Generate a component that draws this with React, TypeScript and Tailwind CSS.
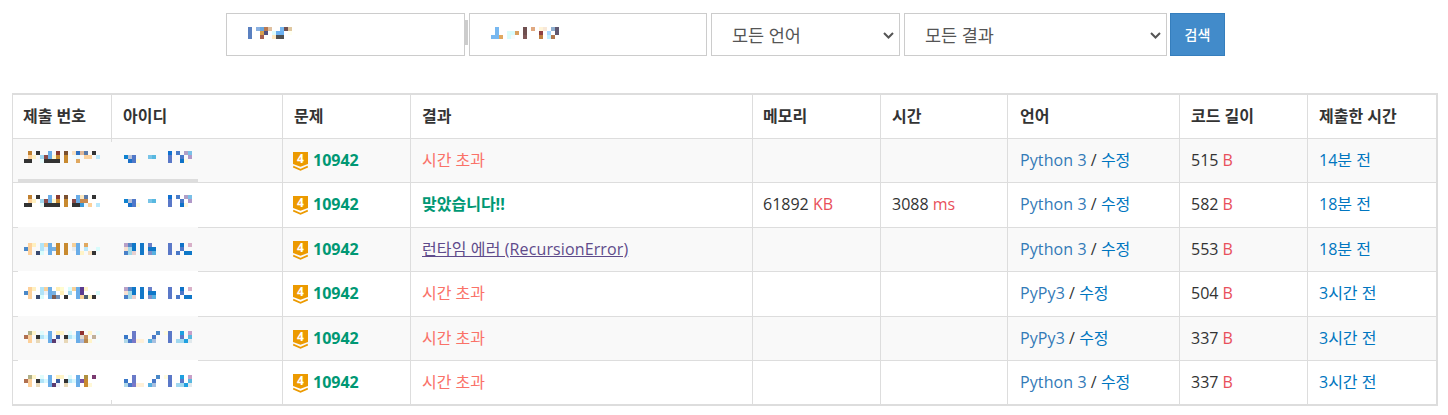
import { Fragment } from 'react'

type Mosaic = { x: number; y: number; rows: string[] }

// blurred-out names, each row is "column:colour" pairs on a 4px grid
const blurA1 = ['1:c08030 3:333 6:6aade8 8:8a3a30 10:7a5030 12:f8e0c0 13:2f70c0 14:e0b898 15:5a7aa8 17:333', '1:fdd09a 2:fff0c0 4:a0d8f0 5:8a4a48 6:6aade8 7:fff8d0 8:c88a30 10:c88a30 12:f4fafa 13:e8f8ff 15:fcd09a 16:fcd09a 18:b8e8fc', '0:333 1:333 4:e8fcfc 5:333 6:333 7:333 8:333 10:c88a30 13:e0a860']
const blurA2 = ['1:c08030 3:333 6:6aade8 8:8a3a30 10:7a5030 13:6aade8 14:fce8c0 15:5a7aa8 17:333', '1:fdd09a 2:fff0c0 4:a0d8f0 5:8a4a48 6:6aade8 7:fff8d0 8:c88a30 10:c88a30 12:8a4a48 13:6aade8 14:c88a50 15:c88a50', '0:333 1:333 4:e8fcfc 5:333 6:333 7:333 8:333 10:c88a30 12:333 13:333 14:3a98d8 15:f0f8fc 16:fcd09a 18:b8e8fc']
const blurB = ['11:1070d0 13:4a7cc8 15:b0a0c8 16:7ac0e8', '0:0f82d0 1:b8c0d8 2:5078c8 6:78c4e8 7:58b8e0 11:5a78c8 14:4a78c8 16:b098c8', '1:1a70c8 2:5078c8 3:fffbe0 11:5a78c8 14:0f72c8 15:fff8e0']
const blurC = ['1:fdd09a 2:fff0c0 4:b0e4f8 5:f8d098 6:6aade8 8:c88a30 10:c88a30 12:f8d098 13:6aade8 15:e0a860', '0:4a88c8 1:fdd09a 4:b0e4f8 5:e8f0f8 6:6aade8 7:78b0e0 8:c88a30 10:c88a30 12:e8ecf0 13:6aade8 15:b8e8fc 18:d8fcfc', '1:fdd09a 3:3a4a70 4:d8fcfc 6:6aade8 8:c88a30 10:c88a30 13:6aade8 14:fff4c8 16:f8e0c0 17:333']
const blurD = ['1:fdd09a 2:fff0c0 4:b0e4f8 5:f8d098 6:6aade8 8:fff0b8 9:fffcd0 11:d8fcfc 12:f8d098 13:6aade8 14:5a3a90 15:fff4c8', '0:4a88c8 1:fdd09a 4:b0e4f8 5:e8f0f8 6:6aade8 7:78b0e0 9:fff0b8 11:a0d8f0 13:6aade8 14:5a3a90 18:d8fcfc', '1:fdd09a 3:3a4a70 4:d8fcfc 6:6aade8 7:7a5a50 8:7090b8 10:333 13:6aade8 14:f8d098 15:4a6070 16:fff4c8 17:333']
const blurE = ['0:b8a0c8 1:5a88c8 2:0f78c8 4:1478c8 6:6a80c8 11:5a78c8 14:0f72c8 16:d8b0c8', '0:f8e0d0 1:a0d8e8 2:0f78c8 4:1478c8 6:0f78c8 7:0f78c8 11:5a78c8 14:5078c8', '0:4a80c8 1:a0d8e8 2:e8d0d0 4:1478c8 6:8090c8 7:58b0e0 11:5a78c8 13:4a78c8 15:0f78c8 16:0f78c8']
const blurF = ['1:b0b088 2:fff4c8 4:e0fcfc 6:6aade8 8:fff0b8 9:fff4c8 11:e0fcfc 13:6aade8 14:903030 16:fff4c8 18:e8fcfc', '0:b07050 1:fdd09a 3:333 4:b0e4f8 5:d8f8ff 6:6aade8 8:3a5aa0 10:333 11:b0e4f8 12:d8f8ff 13:6aade8 14:e0d8d0 15:c89060 17:c0b098', '1:fdd09a 3:e8d8b8 6:6aade8 7:5a3a70 8:f0f0f8 10:e8d8b8 13:6aade8 14:a8b8d8 15:b88850 16:fff4c8 18:f4fcfc']
const blurG = ['1:b0b088 2:fff4c8 4:e0fcfc 6:6aade8 8:fff0b8 9:fff4c8 11:e0fcfc 13:6aade8 15:b09040 17:7a3a70', '0:b07050 1:fdd09a 3:333 4:b0e4f8 5:d8f8ff 6:6aade8 8:3a5aa0 10:333 11:b0e4f8 12:d8f8ff 13:6aade8 14:7a50a0 15:c88a30', '1:fdd09a 3:e8d8b8 6:6aade8 7:5a3a70 8:f0f0f8 10:e8d8b8 13:6aade8 15:c88a30 16:fff8d8']
const blurH = ['2:6a7ac8 8:4a88c8 10:fffce0 11:5a78c8 14:1ea0e0 16:c8a0c8', '0:3a78c8 2:6a7ac8 7:4a78c8 11:5a78c8 14:5a78c8 16:58b8e0', '0:b0d8e8 1:4a78c8 2:7a78c8 3:fff0d8 4:fff0d8 6:58b0e0 7:a8c0e0 11:5a78c8 13:a0d8f0 14:a0d8f0 15:20a0e0 16:e0e8ec']

const overlayBlocks: Mosaic[] = [
    { x: 24, y: 151, rows: blurA1 },
    { x: 124, y: 151, rows: blurB },
    { x: 24, y: 195, rows: blurA2 },
    { x: 124, y: 195, rows: blurB },
    { x: 24, y: 243, rows: blurC },
    { x: 124, y: 243, rows: blurE },
    { x: 24, y: 287, rows: blurD },
    { x: 124, y: 287, rows: blurE },
    { x: 24, y: 331, rows: blurF },
    { x: 124, y: 331, rows: blurH },
    { x: 24, y: 375, rows: blurG },
    { x: 124, y: 375, rows: blurH },
]

const submissions = [
    { h: 'h-[44px]', result: 'tle', memory: '', time: '', lang: 'Python 3', size: '515', ago: '14분 전' },
    { h: 'h-[45px] [&>td]:pb-px', result: 'ac', memory: '61892', time: '3088', lang: 'Python 3', size: '582', ago: '18분 전' },
    { h: 'h-[44px]', result: 'rte', memory: '', time: '', lang: 'Python 3', size: '553', ago: '18분 전' },
    { h: 'h-[45px] [&>td]:pb-px', result: 'tle', memory: '', time: '', lang: 'PyPy3', size: '504', ago: '3시간 전' },
    { h: 'h-[44px]', result: 'tle', memory: '', time: '', lang: 'PyPy3', size: '337', ago: '3시간 전' },
    { h: 'h-[45px]', result: 'tle', memory: '', time: '', lang: 'Python 3', size: '337', ago: '3시간 전' },
]

const headers = [
    { label: '제출 번호', pad: 'pl-[10px]' },
    { label: '아이디', pad: 'pl-[11px]' },
    { label: '문제', pad: 'pl-[11px]' },
    { label: '결과', pad: 'pl-[11px]' },
    { label: '메모리', pad: 'pl-[10px]' },
    { label: '시간', pad: 'pl-[11px]' },
    { label: '언어', pad: 'pl-[12px]' },
    { label: '코드 길이', pad: 'pl-[11px]' },
    { label: '제출한 시간', pad: 'pl-[11px]' },
]
const colWidths = ['w-[99px]', 'w-[171px]', 'w-[128px]', 'w-[342px]', 'w-[128px]', 'w-[127px]', 'w-[172px]', 'w-[128px]', 'w-[129px]']

function Blocks({ blocks }: { blocks: Mosaic[] }) {
    return (
        <>
            {blocks.map((b, i) => (
                <Fragment key={i}>
                    {b.rows.map((row, r) =>
                        row.split(' ').map((c) => {
                            const [col, color] = c.split(':')
                            return <rect key={`${r}-${col}`} x={b.x + Number(col) * 4} y={b.y + r * 4} width={4} height={4} fill={`#${color}`} />
                        }),
                    )}
                </Fragment>
            ))}
        </>
    )
}

function TierBadge() {
    return (
        <div className="relative h-[19px] w-[15px] shrink-0 translate-y-px">
            <svg width="15" height="19" viewBox="0 0 15 19" className="absolute inset-0">
                <path d="M0 0H15V12L7.5 14.7L0 12Z" fill="#ec9a00" />
                <path d="M0.2 14.6L7.5 17.8L14.8 14.6" fill="none" stroke="#ec9a00" strokeWidth="1.6" />
            </svg>
            <span className="absolute inset-x-0 top-0 text-center text-[12px] font-bold leading-[14px] text-white">4</span>
        </div>
    )
}

function SearchInput({ width, x, rows }: { width: string; x: number; rows: string[] }) {
    return (
        <div className={`relative h-[43px] ${width}`}>
            <input className="h-full w-full border border-[#ccc] bg-white outline-none" />
            <svg width="100" height="12" viewBox={`${x} 0 100 12`} className="absolute left-[22px] top-[14px]">
                <Blocks blocks={[{ x, y: 0, rows }]} />
            </svg>
        </div>
    )
}

function SelectBox({ width, label }: { width: string; label: string }) {
    return (
        <div className={`relative ml-1 h-[43px] ${width}`}>
            <select className="h-full w-full appearance-none border border-[#ccc] bg-white pl-[20px] pt-[2px] text-[17.5px] text-[#555] outline-none">
                <option>{label}</option>
            </select>
            <svg width="11" height="7" viewBox="0 0 11 7" className="pointer-events-none absolute right-[6px] top-[19px]">
                <path d="M1 1L5.5 5.5L10 1" fill="none" stroke="#555" strokeWidth="2" />
            </svg>
        </div>
    )
}

function Result({ kind }: { kind: string }) {
    if (kind === 'ac') return <span className="font-bold text-[#009874]">맞았습니다!!</span>
    if (kind === 'rte') return <span className="tracking-[0.12px] text-[#5f4b8b] underline">런타임 에러 (RecursionError)</span>
    return <span className="text-[#fa7268]">시간 초과</span>
}

export default function App() {
    return (
        <div className="h-[415px] w-[1448px] overflow-hidden bg-white font-['Open_Sans','Noto_Sans_CJK_KR',sans-serif] text-[16px] text-[#333]">
            {/* 검색 폼 */}
            <form className="flex items-center pl-[226px] pt-[13px]">
                <SearchInput
                    width="w-[239px]"
                    x={248}
                    rows={[
                        '0:5a80c0 2:8ab0e0 3:6aa8e0 4:b87850 5:e0c0a0 8:78b8f0 9:705050 10:e0c8a0',
                        '0:5a80c0 3:d8a050 4:505080 6:e0fcfc 7:6ab0f0 8:6ab0f0 10:fffff0',
                        '0:5a80c0 3:a86050 6:ffe8c0 7:505050 8:505050',
                    ]}
                />
                <div className="mr-px h-[25px] w-[3px] -translate-y-[2px] bg-[#ccc]" />
                <SearchInput
                    width="w-[238px]"
                    x={492}
                    rows={[
                        '1:78b8f0 8:705050 10:e0a880 12:fff4d8 13:f8e8d8 15:90b0d0 16:605870',
                        '1:78b8f0 4:d8fcfc 5:d8fcfc 6:d8a060 8:705050 12:904040 14:a8d8ff 16:605870',
                        '0:78b8f0 1:78b8f0 2:e0a860 4:d8fcfc 5:f4fcfc 8:805858 12:c08040 14:c0f0ff 15:b07850',
                    ]}
                />
                <SelectBox width="w-[189px]" label="모든 언어" />
                <SelectBox width="w-[263px]" label="모든 결과" />
                <button type="button" className="ml-[3px] h-[43px] w-[55px] border border-[#357ebd] bg-[#428bca] text-[14px] font-medium text-white">
                    검색
                </button>
            </form>

            {/* 채점 현황 */}
            <div className="relative ml-3 mt-[37px] w-[1425px]">
                <table className="w-full table-fixed border-collapse border-y-2 border-r-2 border-l border-[#ddd]">
                    <colgroup>
                        {colWidths.map((w, i) => (
                            <col key={i} className={w} />
                        ))}
                    </colgroup>
                    <thead>
                        <tr className="h-[44px]">
                            {headers.map((h) => (
                                <th key={h.label} className={`border border-[#ddd] ${h.pad} text-left font-bold text-[#333]`}>
                                    {h.label}
                                </th>
                            ))}
                        </tr>
                    </thead>
                    <tbody>
                        {submissions.map((s, i) => (
                            <tr key={i} className={`${s.h} ${i % 2 === 0 ? 'bg-[#f9f9f9]' : 'bg-white'}`}>
                                <td className="border border-[#ddd]" />
                                <td className="border border-[#ddd]" />
                                <td className="border border-[#ddd] pl-[10px]">
                                    <div className="flex items-center gap-[5px]">
                                        <TierBadge />
                                        <span className="font-bold text-[#009874]">10942</span>
                                    </div>
                                </td>
                                <td className="border border-[#ddd] pl-[11px]">
                                    <Result kind={s.result} />
                                </td>
                                <td className="border border-[#ddd] pl-[10px]">
                                    {s.memory && (
                                        <>
                                            {s.memory} <span className="text-[#e8505b]">KB</span>
                                        </>
                                    )}
                                </td>
                                <td className="border border-[#ddd] pl-[11px]">
                                    {s.time && (
                                        <>
                                            {s.time} <span className="text-[#e8505b]">ms</span>
                                        </>
                                    )}
                                </td>
                                <td className="border border-[#ddd] pl-[12px]">
                                    <span className="tracking-[0.1px] text-[#337ab7]">{s.lang}</span> / <span className="text-[#0076c0]">수정</span>
                                </td>
                                <td className="border border-[#ddd] pl-[11px]">
                                    {s.size} <span className="text-[#e8505b]">B</span>
                                </td>
                                <td className="border border-[#ddd] pl-[11px] text-[#0076c0]">{s.ago}</td>
                            </tr>
                        ))}
                    </tbody>
                </table>

                {/* 가려진 아이디 */}
                <svg width="180" height="258" viewBox="18 142 180 258" className="absolute left-[6px] top-[49px]">
                    <rect x="18" y="142" width="180" height="37" fill="#f9f9f9" />
                    <rect x="18" y="179" width="180" height="3" fill="#ddd" />
                    <rect x="18" y="183" width="180" height="44" fill="#fff" />
                    <rect x="18" y="227" width="180" height="44" fill="#f9f9f9" />
                    <rect x="18" y="271" width="180" height="45" fill="#fff" />
                    <rect x="18" y="316" width="180" height="44" fill="#f9f9f9" />
                    <rect x="18" y="360" width="180" height="40" fill="#fff" />
                    <Blocks blocks={overlayBlocks} />
                </svg>
            </div>
        </div>
    )
}
